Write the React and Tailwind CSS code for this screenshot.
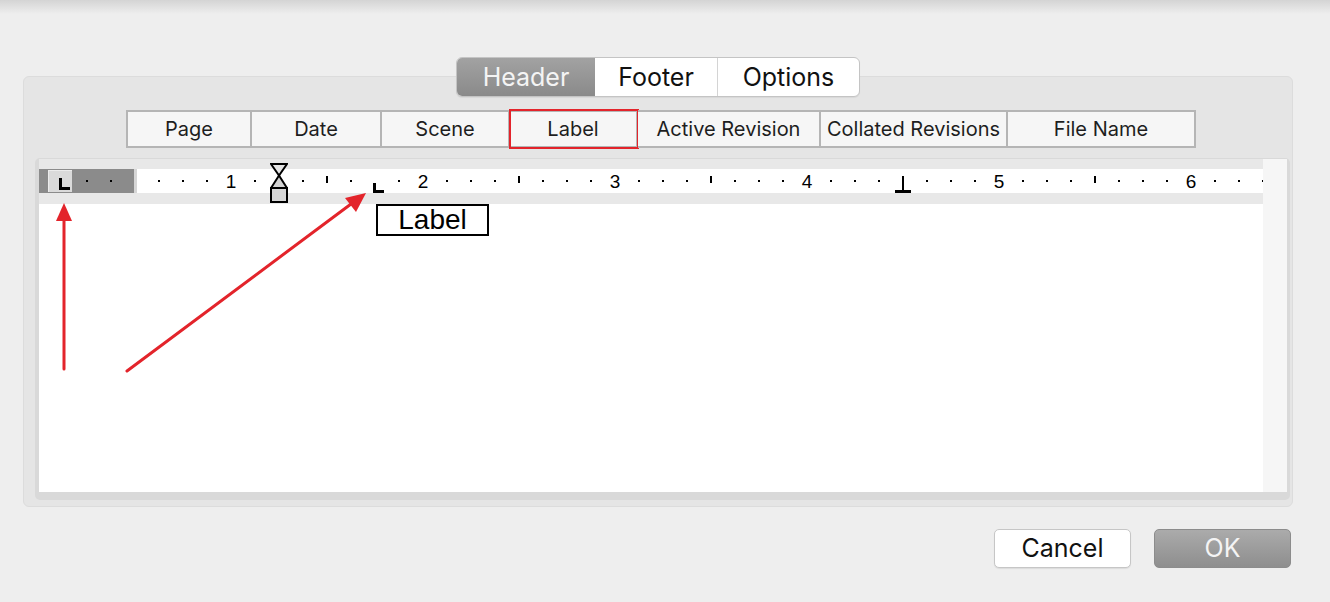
import React from "react"

const UI = { fontFamily: "Inter, 'Liberation Sans', sans-serif" }
const HELV = { fontFamily: "'Liberation Sans', Arial, sans-serif" }

const fields = [
  { name: "Page", w: "w-[126px]" },
  { name: "Date", w: "w-[130px]" },
  { name: "Scene", w: "w-[128px]" },
  { name: "Label", w: "w-[128px]", marked: true },
  { name: "Active Revision", w: "w-[183px]" },
  { name: "Collated Revisions", w: "w-[187px]" },
  { name: "File Name", w: "w-[188px]" },
]

// ruler: 192px per inch, a mark every 1/8"
const Ruler = () => {
  const marks = []
  for (let k = 1; k <= 51; k++) {
    const x = k * 24
    if (k % 8 === 0) {
      marks.push(
        <span key={k} style={{ left: x - 10 }}
          className="absolute top-0 h-[24px] w-[20px] flex items-center justify-center text-[19px] leading-none text-black">
          {k / 8}
        </span>
      )
    } else if (k % 4 === 0) {
      if (k === 4 || k === 36) continue
      marks.push(<span key={k} style={{ left: x - 1 }} className="absolute top-[7px] h-[7px] w-[2px] bg-black" />)
    } else {
      if (k === 10 || k === 14) continue
      marks.push(<span key={k} style={{ left: x - 1 }} className="absolute top-[11px] h-[2px] w-[2px] bg-black" />)
    }
  }

  return (
    <div className="relative h-[24px] w-[1224px] overflow-hidden bg-white" style={HELV}>
      {/* margin area */}
      <div className="absolute left-0 top-0 h-[24px] w-[98px] bg-[#8b8b8b] border-r-[3px] border-[#d6d6d6]" />
      {marks}
      {/* tab type button */}
      <div className="absolute left-[9px] top-[1px] h-[22px] w-[24px] bg-[#dadada] border-t border-l border-[#ececec]">
        <svg className="absolute left-[10px] top-[7px]" width="11" height="12" viewBox="0 0 11 12">
          <path d="M0 0h3v9h8v3H0z" fill="#000" />
        </svg>
      </div>
      {/* left tab stop */}
      <svg className="absolute left-[334px] top-[14px]" width="11" height="10" viewBox="0 0 11 10">
        <path d="M0 0h3v7h8v3H0z" fill="#000" />
      </svg>
      {/* center tab stop */}
      <svg className="absolute left-[856px] top-[7px]" width="16" height="17" viewBox="0 0 16 17">
        <path d="M7 0h2v14h7v3H0v-3h7z" fill="#000" />
      </svg>
    </div>
  )
}

export default function App() {
  return (
    <div className="relative w-[1330px] h-[602px] overflow-hidden bg-[#eeeeee]" style={UI}>
      <div className="h-[14px] bg-gradient-to-b from-[#d4d4d4] to-[#eeeeee]" />

      {/* group box */}
      <div className="ml-[23px] mt-[62px] w-[1270px] h-[431px] rounded-[6px] border border-[#dcdcdc] bg-[#e5e5e5] flex flex-col">

        {/* segmented control */}
        <div className="-mt-[20px] mx-auto flex h-[40px] w-[404px] overflow-hidden rounded-[6px] border border-[#c4c4c4] bg-white shadow-[0_1px_1px_rgba(0,0,0,0.06)] text-[25px] leading-none">
          <div className="w-[138px] flex items-center justify-center bg-gradient-to-b from-[#a2a2a2] to-[#8a8a8a] text-[#f4f4f4]">Header</div>
          <div className="w-[123px] flex items-center justify-center border-r border-[#d4d4d4] text-[#111]">Footer</div>
          <div className="flex-1 flex items-center justify-center text-[#111]">Options</div>
        </div>

        {/* field buttons */}
        <div className="mt-[13px] ml-[102px] flex">
          {fields.map((f, i) => (
            <div key={f.name}
              className={`${f.w} h-[38px] flex items-center justify-center border-2 border-[#b5b5b5] bg-[#f6f6f6] text-[20px] text-[#1e1e1e] ${i > 0 ? "border-l-0" : ""} ${f.marked ? "outline-2 outline-[#e3242b] outline-offset-[-1px]" : ""}`}>
              {f.name}
            </div>
          ))}
        </div>

        {/* editor frame */}
        <div className="mt-[10px] ml-[11px] w-[1255px] h-[342px] rounded-[5px] bg-[#d9d9d9] pt-px pl-[4px] pr-[3px] pb-[8px] flex">
          <div className="relative w-[1224px] flex flex-col">
            <div className="h-[10px] bg-[#e8e8e8]" />
            <Ruler />
            <div className="h-[11px] bg-[#e8e8e8]" />
            <div className="flex-1 bg-white pl-[337px]">
              <div className="w-[113px] h-[32px] border-2 border-black flex items-center justify-center text-[28px] leading-none text-black" style={HELV}>
                Label
              </div>
            </div>

            {/* first-line indent marker */}
            <svg className="absolute left-[231px] top-[4px]" width="18" height="40" viewBox="0 0 18 40">
              <path d="M1 1H17L9 12.5Z" fill="#e6e6e6" stroke="#000" strokeWidth="2" strokeLinejoin="miter" />
              <path d="M9 12.5L17 25H1Z" fill="#d2d2d2" stroke="#000" strokeWidth="2" />
              <rect x="1" y="25" width="16" height="14" fill="#d6d6d6" stroke="#000" strokeWidth="2" />
            </svg>
          </div>
          <div className="w-[24px] bg-[#f6f6f6]" />
        </div>
      </div>

      {/* dialog buttons */}
      <div className="mt-[22px] flex justify-end gap-[23px] pr-[39px] text-[25px] leading-none">
        <div className="w-[137px] h-[39px] flex items-center justify-center rounded-[5px] border border-[#c6c6c6] bg-white text-[#111] shadow-[0_1px_1px_rgba(0,0,0,0.08)]">
          Cancel
        </div>
        <div className="w-[137px] h-[39px] flex items-center justify-center rounded-[5px] border border-[#8c8c8c] bg-gradient-to-b from-[#ababab] to-[#8e8e8e] text-[#f4f4f4]">
          OK
        </div>
      </div>

      {/* annotation arrows */}
      <svg className="absolute inset-0 pointer-events-none" width="1330" height="602" viewBox="0 0 1330 602">
        <line x1="64" y1="369" x2="64" y2="218" stroke="#e3242b" strokeWidth="3" strokeLinecap="round" />
        <polygon points="64,203 56,221 72,221" fill="#e3242b" />
        <line x1="127" y1="371" x2="351" y2="204" stroke="#e3242b" strokeWidth="3" strokeLinecap="round" />
        <polygon points="366,193 345,198 356,212" fill="#e3242b" />
      </svg>
    </div>
  )
}
